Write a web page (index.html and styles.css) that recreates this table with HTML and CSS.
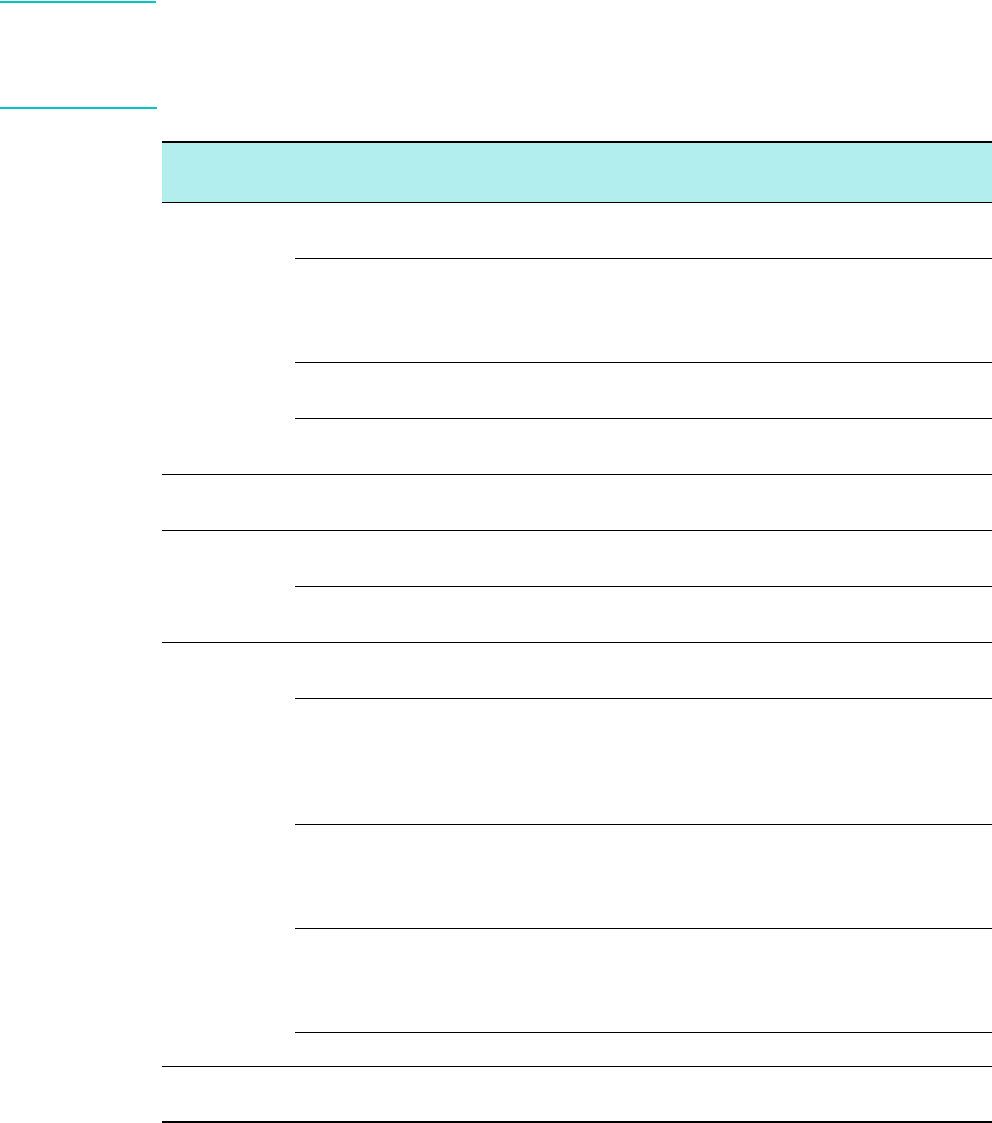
FILE: index.html
```html
<!DOCTYPE html>
<html lang="en">
<head>
<meta charset="utf-8">
<title>Table</title>
<link rel="stylesheet" href="styles.css">
</head>
<body>
<div class="marks">
  <div class="mark mark-top"></div>
  <div class="mark mark-bottom"></div>
</div>
<div class="table">
  <div class="thead"></div>
  <div class="group">
    <div class="lead"></div>
    <div class="rows">
      <div class="row h55"></div>
      <div class="row h103"></div>
      <div class="row h55"></div>
      <div class="row h55"></div>
    </div>
  </div>
  <div class="group">
    <div class="lead"></div>
    <div class="rows">
      <div class="row h55"></div>
    </div>
  </div>
  <div class="group">
    <div class="lead"></div>
    <div class="rows">
      <div class="row h55"></div>
      <div class="row h55"></div>
    </div>
  </div>
  <div class="group">
    <div class="lead"></div>
    <div class="rows">
      <div class="row h55"></div>
      <div class="row h125"></div>
      <div class="row h103"></div>
      <div class="row h103"></div>
      <div class="row h33"></div>
    </div>
  </div>
  <div class="group group-last">
    <div class="lead"></div>
    <div class="rows">
      <div class="row h54"></div>
    </div>
  </div>
</div>
</body>
</html>
```
FILE: styles.css
```css
html, body {
  margin: 0;
  padding: 0;
  background: #ffffff;
  font-family: "Liberation Sans", Arial, sans-serif;
  overflow: hidden;
}

.marks {
  display: flex;
  flex-direction: column;
  gap: 104px;
  padding-top: 1px;
}

.mark {
  height: 2px;
  background: #00c6c6;
}

.mark-top { width: 156px; }
.mark-bottom { width: 157px; }

.table {
  margin-top: 32px;
  margin-left: 162px;
  width: 830px;
  border-top: 2px solid #000;
  border-bottom: 2px solid #000;
}

.thead {
  height: 59px;
  background: #b2eeee;
  border-bottom: 1px solid #000;
}

.group {
  display: flex;
  border-bottom: 1px solid #000;
}

.group-last {
  border-bottom: none;
}

.lead {
  width: 133px;
  flex: none;
}

.rows {
  flex: 1;
  display: flex;
  flex-direction: column;
}

.row {
  border-bottom: 1px solid #000;
}

.row:last-child {
  border-bottom: none;
}

.h33 { height: 33px; }
.h54 { height: 54px; }
.h55 { height: 55px; }
.h103 { height: 103px; }
.h125 { height: 125px; }
```
